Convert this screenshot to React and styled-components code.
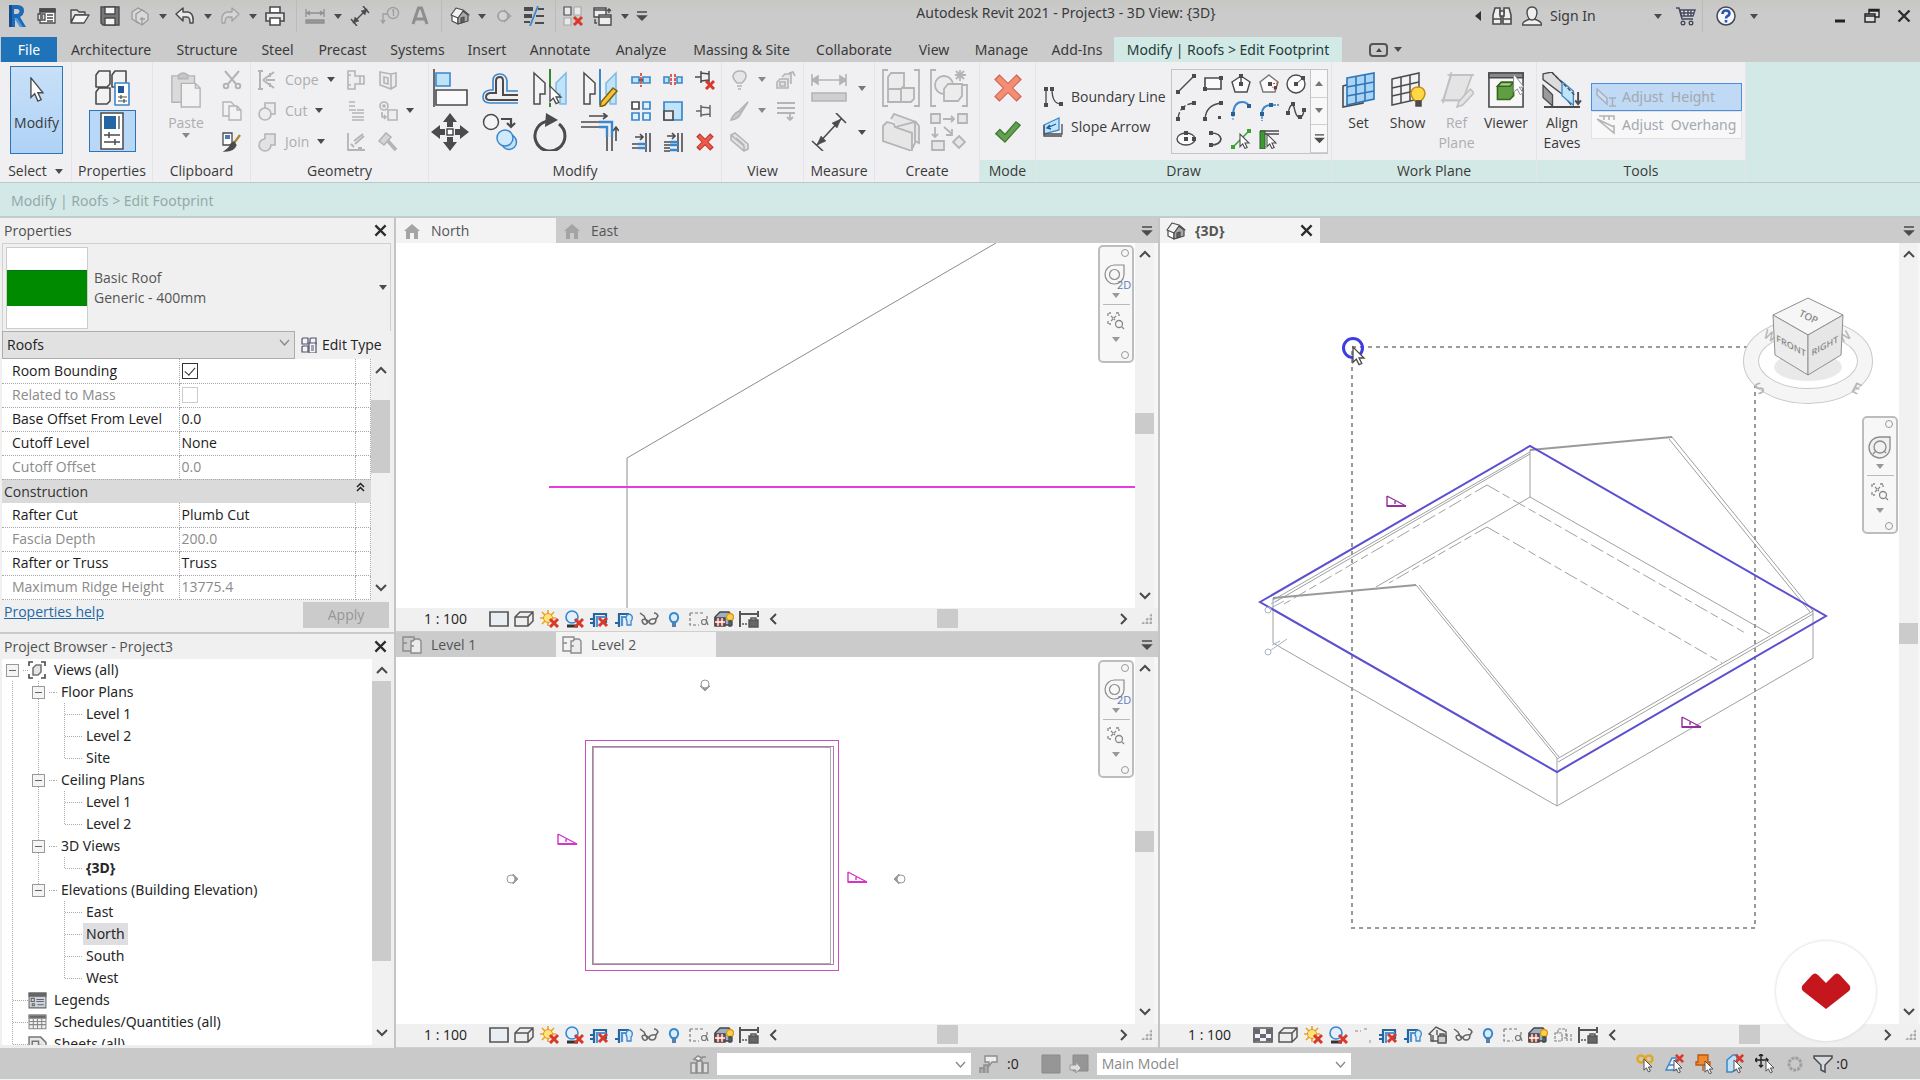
import React from 'react';
import styled, { createGlobalStyle, css } from 'styled-components';

const GlobalStyle = createGlobalStyle`
  * {
    box-sizing: border-box;
  }

  body {
    margin: 0;
    color: #3a3a3a;
    background: #cbcbcb;
    font-family: 'Open Sans', 'Noto Sans', sans-serif;
    font-size: 14px;
    line-height: 20px;
  }

  button, select, input {
    margin: 0;
    font: inherit;
    color: inherit;
  }

  button {
    padding: 0;
    border: 0;
    background: none;
  }
`;

/* ---------- icons ---------- */

const D = '#4b4b4d';
const B = '#3b87cc';
const L = '#bfe3f8';
const G = '#b4b4b6';
const R = '#d8392b';

const Arrow = 'M0 0 L0 14 L3 11 L5.500 16 L8 15 L5.500 10 L10 10 Z';

const RedX = ({ x = 0, y = 0, s = 1 }) => (
  <g transform={`translate(${x} ${y}) scale(${s})`}>
    <path d="M1 1 L9 9 M9 1 L1 9" stroke={R} strokeWidth="3" fill="none" />
  </g>
);

const Pointer = ({ x, y, s = 1 }) => (
  <path d={Arrow} transform={`translate(${x} ${y}) scale(${s})`} fill="#fff" stroke={D} strokeWidth="1.2" />
);

/* every entry is [viewBox width, viewBox height, drawing] */
const icons = {
  revit: [20, 26, (
    <g>
      <path d="M2 2 H11 Q18 3 17 9 Q16.500 12 13 14 L19 24 H13 L8 15 V24 H2 Z M7 6 V11 H10 Q12.500 10.500 12.500 8.500 Q12.500 6 10 6 Z" fill="#1d6bb8" fillRule="evenodd" />
      <path d="M2 2 H5 V24 H2 Z" fill="#134d8c" />
      <path d="M7 15 L10 15 L16 24 H13 Z" fill="#4e9ada" />
    </g>
  )],
  home: [20, 20, (
    <g fill="#fff" stroke={D} strokeWidth="1.3">
      <path d="M3 3 H18 V17 H3 Z" />
      <path d="M3 3 H18 V6 H3 Z" fill={D} />
      <path d="M1 8 H8 V14 H1 Z" fill="#ddd" />
      <path d="M10 9 H16 M10 12 H16 M10 15 H16 M3 10 H6 M3 12 H6" />
    </g>
  )],
  open: [20, 20, (
    <g fill="#e4e4e4" stroke={D} strokeWidth="1.4" strokeLinejoin="round">
      <path d="M1 4 H7 L9 6 H15 V9 H5 L1 16 Z" />
      <path d="M5 9 H19 L14 17 H1 Z" fill="#f5f5f5" />
    </g>
  )],
  save: [20, 20, (
    <g stroke={D} strokeWidth="1.4">
      <path d="M1 1 H19 V19 H3 L1 17 Z" fill="#777" />
      <path d="M5 1 H15 V8 H5 Z M5 12 H15 V19 H5 Z" fill="#f4f4f4" />
    </g>
  )],
  sync: [20, 20, (
    <g fill="#d8d8d8" stroke="#9a9a9a" strokeWidth="1.3">
      <path d="M2 6 L8 2 L14 5 V13 L8 17 L2 13 Z" />
      <path d="M6 8 L12 4 L18 8 V14 L12 19 L6 15 Z" />
      <path d="M12 11 V19 M10 13 H15" />
    </g>
  )],
  undo: [20, 20, <path d="M1 8 L8 2 V6 H13 Q19 7 18 17 H15 Q15 11 12 11 H8 V15 Z" fill="#e8e8e8" stroke={D} strokeWidth="1.5" strokeLinejoin="round" />],
  redo: [20, 20, <path d="M19 8 L12 2 V6 H7 Q1 7 2 17 H5 Q5 11 8 11 H12 V15 Z" fill="#d6d6d6" stroke="#a3a3a3" strokeWidth="1.4" strokeLinejoin="round" />],
  print: [20, 20, (
    <g fill="#fff" stroke={D} strokeWidth="1.6">
      <path d="M5 1 H15 V7 H5 Z" />
      <path d="M1 7 H19 V15 H1 Z" fill="#e6e6e6" />
      <path d="M5 12 H15 V19 H5 Z" />
    </g>
  )],
  measure: [20, 20, (
    <g stroke="#8f8f8f" fill="none" strokeWidth="1.3">
      <path d="M1 3 V11 M19 3 V11 M2 7 H18 M5 5 L2 7 L5 9 M15 5 L18 7 L15 9" />
      <path d="M1 14 H19 V17 H1 Z" fill="#999" />
    </g>
  )],
  dim: [20, 20, (
    <g stroke={D} fill={D} strokeWidth="1.5">
      <path d="M3 17 L17 3" />
      <path d="M3 17 L9 15 L5 11 Z M17 3 L11 5 L15 9 Z" strokeWidth="0.500" />
      <path d="M1 13 L7 20 M13 0 L19 7" />
    </g>
  )],
  tag: [20, 20, (
    <g stroke="#a0a0a0" fill="none" strokeWidth="1.4">
      <circle cx="13" cy="7" r="5.500" />
      <path d="M12 5 L13.500 4 V10 M8 8 H3 V17 M1 14 L3 17 L5 14" />
    </g>
  )],
  letterA: [20, 20, <path d="M3 18 L8.500 2 H11.500 L17 18 M5 13 H15" fill="none" stroke="#8e8e8e" strokeWidth="3" />],
  house: [20, 20, (
    <g stroke={D} strokeWidth="1.2" strokeLinejoin="round">
      <path d="M2 9 L8 11 V18 L2 15 Z" fill="#fff" />
      <path d="M8 11 L13 5 L18 9 V15 L8 18 Z" fill="#a8a8a8" />
      <path d="M1 9 L6 2 L13 4 L19 9 L13 5 L8 12 Z" fill="#f2f2f2" />
      <path d="M11 12 L14 11 V16 L11 17 Z" fill="#666" />
    </g>
  )],
  section: [20, 20, (
    <g fill="none" stroke="#9c9c9c" strokeWidth="1.6">
      <circle cx="9" cy="10" r="5" />
      <path d="M10 3 L18 10 L10 17 Z" fill="#9c9c9c" stroke="none" opacity="0.700" />
      <circle cx="9" cy="10" r="4" fill="#d2d2d2" stroke="none" />
    </g>
  )],
  thin: [20, 20, (
    <g stroke={D}>
      <path d="M0 3 H9 M0 10 H8" strokeWidth="4" />
      <path d="M0 16 H6 M11 17 H20 M12 10 H20 M14 3 H20" strokeWidth="2" />
      <path d="M14 0 L6 20" stroke={B} strokeWidth="1.8" />
    </g>
  )],
  closeHidden: [20, 20, (
    <g fill="#e9e9e9" stroke={D} strokeWidth="1.2">
      <path d="M1 1 H8 V9 H1 Z" />
      <path d="M11 1 H18 V9 H11 Z M1 12 H8 V19 H1 Z" stroke="#aaa" />
      <RedX x={10} y={10} />
    </g>
  )],
  windows: [20, 20, (
    <g fill="#eee" stroke={D} strokeWidth="1.4">
      <path d="M2 2 H14 V11 H2 Z M2 4 H14" />
      <path d="M7 9 H19 V19 H7 Z M7 11 H19" />
      <path d="M17 7 V3 M15 5 L17 3 L19 5 M3 13 V17 H5" fill="none" />
    </g>
  )],
  more: [12, 12, <path d="M1 2 H11 M2 6 H10 L6 10 Z" fill={D} stroke={D} strokeWidth="1.5" />],
  binoculars: [22, 20, (
    <g fill="#efefef" stroke={D} strokeWidth="1.6">
      <path d="M4 2 H9 V7 L10 10 V18 H2 V9 Z M13 2 H18 L20 9 V18 H12 V10 L13 7 Z" />
      <path d="M9 5 H13 V10 H9 Z M2 13 H10 M12 13 H20" />
    </g>
  )],
  person: [20, 20, (
    <g fill="#efefef" stroke={D} strokeWidth="1.4">
      <path d="M0 19 Q1 15 8 13 H12 Q19 15 20 19 Z" />
      <path d="M10 1 Q15 1 15 7 Q14 14 10 14 Q6 14 5 7 Q5 1 10 1 Z" />
    </g>
  )],
  cart: [20, 20, (
    <g fill="#e5e5ee" stroke="#44485c" strokeWidth="1.4">
      <path d="M0 2 H3 L6 13 H17" fill="none" />
      <path d="M4 4 H19 L17 10 H5.500 Z M8 4 V10 M12 4 V10 M15 4 V10 M4 7 H18" />
      <circle cx="7" cy="17" r="1.800" />
      <circle cx="15" cy="17" r="1.800" />
    </g>
  )],
  help: [20, 20, (
    <g>
      <circle cx="10" cy="10" r="9" fill="#f4f6fb" stroke="#44484f" strokeWidth="1.5" />
      <path d="M6.500 8 Q6.500 4.500 10 4.500 Q13.500 4.500 13.500 7.500 Q13.500 9 11.500 10 Q10 11 10 12.500 M10 14 V16.500" fill="none" stroke="#2a56b4" strokeWidth="2.600" />
    </g>
  )],
  searchArrow: [6, 10, <path d="M6 0 V10 L0 5 Z" fill="#333" />],
  min: [14, 16, <path d="M2 13 H12" stroke="#222" strokeWidth="3" />],
  restore: [16, 16, (
    <g fill="#ddd" stroke="#222" strokeWidth="1.4">
      <path d="M5 1.500 H15 V9 H5 Z M5 3 H15" />
      <path d="M1 6 H11 V14 H1 Z M1 8 H11" />
    </g>
  )],
  close: [14, 14, <path d="M1.500 1.500 L12.500 12.500 M12.500 1.500 L1.500 12.500" stroke="#2b2b2b" strokeWidth="2.400" />],

  cursor: [16, 28, <path d="M2 1 V22 L6 18 L9.500 26 L13 24.500 L9.500 17 L15 17 Z" fill="#fff" stroke={D} strokeWidth="1.5" />],
  typeProps: [36, 38, (
    <g fill="#f2f2f2" stroke={D} strokeWidth="1.600" strokeLinejoin="round">
      <path d="M2 6 L5 2 H16 V15 L13 18 H2 Z M18 6 L21 2 H32 V15 L29 18 H18 Z M2 23 L5 19 H16 V32 L13 35 H2 Z" />
      <path d="M21 14 H35 V36 H21 Z" fill="#fff" stroke={B} />
      <path d="M24 17 H30 V24 H24 Z" fill="#1f5a96" stroke="none" />
      <path d="M24 28 H33 M24 32 H33 M27 26 V30 M30 30 V34" strokeWidth="1.2" />
    </g>
  )],
  props: [26, 38, (
    <g fill="none" stroke={D} strokeWidth="1.500">
      <path d="M2 1 H24 V37 H2 Z" fill="#fff" />
      <path d="M5 4 H17 V17 H5 Z" fill="#2564a5" stroke="none" />
      <path d="M20 4 V17" stroke="#888" strokeWidth="2" />
      <path d="M5 23 H21 M5 30 H21 M10 20 V26 M16 27 V33" />
    </g>
  )],
  paste: [34, 38, (
    <g fill="#dadada" stroke={G} strokeWidth="1.500">
      <path d="M2 4 H26 V32 H2 Z" />
      <path d="M9 7 V3 Q14 -1 19 3 V7 Z" fill="#c6c6c6" />
      <path d="M12 12 H27 L32 17 V37 H12 Z M27 12 V17 H32" fill="#f2f2f2" />
    </g>
  )],
  cutClip: [20, 20, (
    <g fill="none" stroke={G} strokeWidth="2">
      <path d="M3 1 L14 14 M17 1 L6 14" />
      <circle cx="4" cy="16" r="2.300" />
      <circle cx="16" cy="16" r="2.300" />
    </g>
  )],
  copyClip: [20, 20, (
    <g fill="#f2f2f2" stroke={G} strokeWidth="1.400">
      <path d="M1 1 H9 L12 4 V15 H1 Z" />
      <path d="M7 5 H15 L19 9 V19 H7 Z M15 5 V9 H19" />
    </g>
  )],
  match: [20, 20, (
    <g stroke={D} strokeWidth="1.300">
      <path d="M1 1 H10 V13 H1 Z" fill="#fff" />
      <path d="M3 3 H8 V7 H3 Z" fill="#4a7ab0" stroke="none" />
      <path d="M18 3 L12 11" stroke="#a98a3e" strokeWidth="2.400" />
      <path d="M12 10 L14 13 Q12 19 3 19 Q8 16 9 12 Z" fill={D} />
    </g>
  )],
  cope: [20, 20, <path d="M1 1 H6 M1 19 H6 M3 1 V19 M6 10 L17 2 M6 10 L17 18 M9 10 H18 M13 3 V7 M13 13 V17" fill="none" stroke={G} strokeWidth="2" />],
  cutG: [20, 20, (
    <g fill="#ececec" stroke={G} strokeWidth="1.600">
      <path d="M8 7 V2 H18 V13 H14" />
      <circle cx="8" cy="13" r="6" />
    </g>
  )],
  joinG: [20, 20, <path d="M8 7 V2 H18 V13 H14 A6 6 0 1 1 8 7" fill="#e2e2e2" stroke={G} strokeWidth="1.600" />],
  beam: [20, 20, <path d="M2 1 H9 V6 H18 V14 H9 V19 H2 Z M2 5 H5 M2 15 H5 M14 6 V14" fill="#eee" stroke={G} strokeWidth="1.600" />],
  wallJoin: [20, 20, (
    <g fill="none" stroke={G} strokeWidth="1.600">
      <path d="M3 1 H9 M3 5 H9 M3 9 H10 M6 12 H18 M6 16 H18 M6 19 H18 M11 9 H18" />
    </g>
  )],
  split: [20, 20, <path d="M2 1 V18 H19 M5 12 L8 15 M8 9 L17 2 M9 12 L18 4 M12 16 H16" fill="none" stroke={G} strokeWidth="1.800" />],
  face: [20, 20, <path d="M2 2 L13 4 L18 3 V16 L13 19 L2 15 Z M13 4 V19 M6 7 L10 8 V14 L6 13 Z" fill="#ececec" stroke={G} strokeWidth="1.600" />],
  paint: [20, 20, (
    <g fill="#eee" stroke={G} strokeWidth="1.600">
      <circle cx="6" cy="5" r="4" />
      <path d="M10 9 H19 V19 H10 Z M4 11 V16 H8 M6 14 L8 16 L6 18" />
      <circle cx="6" cy="5" r="1" />
    </g>
  )],
  demolish: [20, 20, (
    <g stroke={G}>
      <path d="M9 8 L18 18" strokeWidth="3.500" />
      <path d="M1 9 L8 1 L13 5 L6 13 Z" fill="#d5d5d5" strokeWidth="1.600" />
    </g>
  )],

  align: [36, 38, (
    <g stroke={D} strokeWidth="1.600">
      <path d="M2 0 V38" />
      <path d="M4 4 H18 V17 H4 Z" fill={L} stroke={B} />
      <path d="M4 21 H35 V36 H4 Z" fill="#fafafa" />
    </g>
  )],
  offset: [38, 34, (
    <g fill="none">
      <path d="M37 20 H26 V10 Q25 3 19 3 Q12 3 12 10 V19 H9 Q2 20 2 26 Q2 32 9 32 H37" stroke={B} strokeWidth="1.600" />
      <path d="M37 24 H22 V10 Q22 6 19 6 Q15 6 15 10 V22 H9 Q5 23 5 26 Q5 29 9 29 H37" stroke={D} strokeWidth="2" />
    </g>
  )],
  mirrorPick: [36, 38, (
    <g stroke={D} strokeWidth="1.500">
      <path d="M2 4 L13 14 V25 H8 V35 H2 Z" fill="#f4f4f4" />
      <path d="M34 4 L24 14 V25 H28 V35 H34 Z" fill={L} stroke="#7fb9e2" />
      <path d="M18 0 V18" stroke="#2f8a2a" strokeWidth="2" />
      <path d="M18 34 V38" stroke="#2f8a2a" strokeWidth="2" />
      <Pointer x={18} y={17} s={1.1} />
    </g>
  )],
  mirrorDraw: [36, 38, (
    <g stroke={D} strokeWidth="1.500">
      <path d="M2 4 L13 14 V25 H8 V35 H2 Z" fill="#f4f4f4" />
      <path d="M34 4 L24 14 V25 H28 V35 H34 Z" fill={L} stroke="#7fb9e2" />
      <path d="M18 0 V36" stroke={B} strokeWidth="2" />
      <path d="M31 19 L35 22 L23 36 L18 38 L19 33 Z" fill="#f3c33c" stroke="#80600f" />
    </g>
  )],
  move: [38, 38, (
    <g fill={D}>
      <path d="M19 0 L26 9 H22 V14 H16 V9 H12 Z M19 38 L26 29 H22 V24 H16 V29 H12 Z M0 19 L9 12 V16 H14 V22 H9 V26 Z M38 19 L29 12 V16 H24 V22 H29 V26 Z" />
      <path d="M16 16 H22 V22 H16 Z" fill="#fff" stroke={D} strokeWidth="1.500" />
    </g>
  )],
  copyBig: [36, 38, (
    <g fill="#f4f4f4" stroke={D} strokeWidth="1.500">
      <circle cx="9" cy="9" r="7.500" />
      <path d="M19 6 H29 V13 M25 10 L29 14 L33 10" fill="none" strokeWidth="2.200" />
      <circle cx="27" cy="29" r="7.500" fill={L} stroke={B} />
      <circle cx="23" cy="25" r="8" fill="#cfeafa" stroke={B} />
    </g>
  )],
  rotate: [36, 38, (
    <g>
      <path d="M17 6 A15 15 0 1 0 27 9" fill="none" stroke={D} strokeWidth="3" transform="translate(0 2)" />
      <path d="M14 0 L26 7 L13 14 Z" fill={D} />
    </g>
  )],
  trim: [38, 38, (
    <g fill="none" stroke={D} strokeWidth="1.600">
      <path d="M8 3 H26 M22 0 L26 3 L22 6 M35 28 V14 M32 18 L35 14 L38 18 M0 9 H18 M0 14 H18 M26 24 V38 M31 24 V38" />
      <path d="M18 9 H31 V24 M18 14 H26 V24" stroke={B} strokeWidth="2.400" />
    </g>
  )],
  splitEl: [20, 14, (
    <g fill={L} stroke={B} strokeWidth="1.600">
      <path d="M1 4 H8 V10 H1 Z M12 4 H19 V10 H12 Z" />
      <path d="M8 7 H12" stroke={D} />
      <path d="M10 0 V14" stroke={R} strokeDasharray="3 1" />
    </g>
  )],
  splitGap: [20, 14, (
    <g fill={L} stroke={B} strokeWidth="1.600">
      <path d="M1 4 H6 V10 H1 Z M14 4 H19 V10 H14 Z" />
      <path d="M8 1 V13 M12 1 V13" stroke={R} strokeDasharray="3 1" />
    </g>
  )],
  unpin: [20, 20, (
    <g fill="#eee" stroke={D} strokeWidth="1.500">
      <path d="M0 7 H6 M6 1 V13 M6 3 L14 4 M6 11 L14 10 M14 1 V13" />
      <RedX x={10} y={10} s={1} />
    </g>
  )],
  array: [20, 20, (
    <g fill="#dff1fc" stroke={B} strokeWidth="1.700">
      <path d="M1 1 H8 V8 H1 Z" fill="#fff" stroke={D} />
      <path d="M12 1 H19 V8 H12 Z M1 12 H8 V19 H1 Z M12 12 H19 V19 H12 Z" />
    </g>
  )],
  scale: [20, 20, (
    <g fill={L} stroke={B} strokeWidth="1.700">
      <path d="M1 1 H19 V19 H1 Z" />
      <path d="M1 10 H10 V19 H1 Z" fill="#eee" stroke={D} />
    </g>
  )],
  pin: [20, 20, <path d="M1 10 H6 M6 4 V16 M6 6 L15 7 M6 14 L15 13 M15 4 V16" fill="none" stroke="#666" strokeWidth="1.500" />],
  trimOne: [20, 20, (
    <g fill="none" stroke={D} strokeWidth="1.600">
      <path d="M4 5 H12 M9 2 L12 5 L9 8 M1 12 H7 M1 16 H7 M15 1 V20 M19 1 V20" />
      <path d="M7 12 H15 M7 16 H15" stroke={B} strokeWidth="2.400" />
    </g>
  )],
  trimMany: [20, 20, (
    <g fill="none" stroke={D} strokeWidth="1.600">
      <path d="M4 4 H12 M9 1 L12 4 L9 7 M1 10 H7 M1 13 H7 M1 16 H7 M1 19 H7 M15 1 V20 M19 1 V20" />
      <path d="M7 10 H15 M7 13 H15 M7 18 H15" stroke={B} strokeWidth="2.400" />
    </g>
  )],
  del: [20, 20, (
    <g>
      <path d="M3 3 L17 17 M17 3 L3 17" stroke="#c0392b" strokeWidth="5" />
      <path d="M4 4 L16 16 M16 4 L4 16" stroke="#f05a4a" strokeWidth="3" />
    </g>
  )],

  bulb: [20, 20, <path d="M7 13 Q3 9 3 6 Q4 1 10 1 Q16 1 16 6 Q16 9 12 13 Z M7 16 H12 M8 19 H11" fill="#e6e6e6" stroke={G} strokeWidth="1.600" />],
  hideBox: [20, 20, <path d="M1 12 L4 9 H12 V18 H1 Z M6 7 L9 4 H15 V14 M13 3 L17 2 L19 6 M4 12 H9 V16 H4 Z" fill="#e6e6e6" stroke={G} strokeWidth="1.600" />],
  brush: [20, 20, <path d="M18 1 L9 10 L11 12 Z M9 10 Q3 13 1 19 Q9 18 11 12 Z" fill="#c9c9c9" stroke={G} strokeWidth="1.600" />],
  lineW: [20, 20, <path d="M1 2 H19 M1 7 H19 M1 12 H19 M14 12 V19 M11 16 L14 19 L17 16" fill="none" stroke={G} strokeWidth="1.800" />],
  displace: [20, 20, <path d="M1 3 L5 1 L18 12 V17 L14 19 L1 8 Z M6 6 L14 13 M1 3 L14 14 V19" fill="#e2e2e2" stroke={G} strokeWidth="1.600" />],
  rulerBig: [36, 34, (
    <g stroke={G} fill={G} strokeWidth="1.600">
      <path d="M1 9 H35 M1 9 L7 5 V13 Z M35 9 L29 5 V13 Z M1 3 V15 M35 3 V15" />
      <path d="M1 22 H35 V30 H1 Z" fill="#cfcfcf" />
    </g>
  )],
  dimBig: [36, 38, (
    <g stroke={D} fill={D} strokeWidth="1.600">
      <path d="M6 32 L30 6 M1 28 L12 38 M25 0 L35 10" />
      <path d="M6 32 L15 28 L10 23 Z M30 6 L21 10 L26 15 Z" strokeWidth="0.500" />
    </g>
  )],
  group1: [38, 38, (
    <g fill="#ececec" stroke={G} strokeWidth="1.800">
      <path d="M6 1 H1 V37 H6 M32 1 H37 V37 H32" fill="none" />
      <path d="M6 8 L9 4 H22 V19 H32 V30 L29 33 H6 Z M6 20 H19 V33 M19 20 L22 17" />
    </g>
  )],
  group2: [38, 38, (
    <g fill="#ececec" stroke={G} strokeWidth="1.800">
      <path d="M6 1 H1 V37 H6 M32 16 H37 V37 H32" fill="none" />
      <circle cx="14" cy="16" r="9" />
      <path d="M14 20 L18 15 H32 V27 L28 32 H14 Z" />
      <path d="M30 1 V12 M25 6 H36 M26 2 L34 10 M34 2 L26 10" />
    </g>
  )],
  assembly: [38, 38, (
    <g fill="#e6e6e6" stroke={G} strokeWidth="1.800">
      <path d="M9 6 L12 1 L34 9 L37 13 V30 L33 28" />
      <path d="M1 13 L5 9 L12 11 L13 14 L30 20 V38 L1 28 Z" />
      <path d="M13 14 L33 9 V30 L30 36" fill="none" />
    </g>
  )],
  similar: [38, 38, (
    <g fill="#e6e6e6" stroke={G} strokeWidth="1.800">
      <path d="M1 1 H10 V10 H1 Z M28 1 H37 V10 H28 Z M2 28 H14 V37 H2 Z M29 23 L35 29 L29 35 L23 29 Z" />
      <path d="M13 6 H24 M21 3 L24 6 L21 9 M5 14 V24 M2 21 L5 24 L8 21 M14 14 L22 21 M22 16 V22 H16" fill="none" />
    </g>
  )],
  cancel: [30, 30, (
    <g>
      <path d="M3 3 L27 27 M27 3 L3 27" stroke="#c9604c" strokeWidth="8" />
      <path d="M4 4 L26 26 M26 4 L4 26" stroke="#f58c74" strokeWidth="6" />
    </g>
  )],
  accept: [32, 28, <path d="M2 16 L7 11 L13 17 L26 2 L31 6 L13 26 Z" fill="#63a04f" stroke="#3f7a35" strokeWidth="1.500" />],

  boundary: [20, 20, (
    <g fill="none" stroke={D} strokeWidth="1.300">
      <path d="M3 2 V18 M9 2 Q9 17 18 17" />
      <path d="M1 0 H5 V4 H1 Z M1 16 H5 V20 H1 Z M7 0 H11 V4 H7 Z M16 15 H20 V19 H16 Z" fill={D} stroke="none" />
    </g>
  )],
  slope: [20, 20, (
    <g fill={L} stroke={B} strokeWidth="1.300">
      <path d="M1 8 L16 1 V13 L1 17 Z" />
      <path d="M1 17 H19 V7 M1 8 V19 H19" fill="none" stroke={D} />
      <path d="M13 7 L4 11 M7 8 L4 11 L8 12" stroke="#1f5a96" fill="none" />
    </g>
  )],
  dLine: [20, 20, <g><path d="M2 18 L18 2" stroke={D} strokeWidth="1.400" /><path d="M0 16 H4 V20 H0 Z M16 0 H20 V4 H16 Z" fill={D} /></g>],
  dRect: [20, 20, <g><path d="M2 4 H18 V15 H2 Z" fill="#fafafa" stroke={D} strokeWidth="1.600" /><path d="M0 13 H4 V17 H0 Z M16 2 H20 V6 H16 Z" fill={D} /></g>],
  dPoly: [20, 20, <g><path d="M10 2 L19 8 L16 18 H4 L1 8 Z" fill="#fafafa" stroke={D} strokeWidth="1.400" /><path d="M10 10 V2" stroke={D} strokeWidth="1.400" /><path d="M8 0 H12 V4 H8 Z M8 8 H12 V12 H8 Z" fill={D} /></g>],
  dPolyC: [20, 20, <g><path d="M10 1 L19 8 L16 18 H4 L1 8 Z" fill="#fafafa" stroke="#777" strokeWidth="1.400" /><path d="M11 10 L19 9 L16 16 Z" fill="none" stroke={R} strokeDasharray="2 1" /><path d="M9 8 H13 V12 H9 Z M15 12 H18 V15 H15 Z" fill={D} /></g>],
  dCircle: [20, 20, <g><circle cx="10" cy="10" r="9" fill="#fafafa" stroke={D} strokeWidth="1.400" /><path d="M10 10 L17 4" stroke={D} /><path d="M8 8 H12 V12 H8 Z M15 2 H19 V6 H15 Z" fill={D} /></g>],
  dArc3: [20, 20, <g><path d="M2 18 Q3 4 18 2" fill="none" stroke={D} strokeWidth="1.400" strokeDasharray="7 2" /><path d="M0 16 H4 V20 H0 Z M5 5 H9 V9 H5 Z M16 0 H20 V4 H16 Z" fill={D} /></g>],
  dArcC: [20, 20, <g><path d="M2 18 Q3 4 18 2" fill="none" stroke={D} strokeWidth="1.400" /><path d="M0 16 H4 V20 H0 Z M16 0 H20 V4 H16 Z M15 15 H18 V18 H15 Z" fill={D} /></g>],
  dArcT: [20, 20, <g><path d="M2 13 Q3 1 11 1 Q16 1 18 5" fill="none" stroke={B} strokeWidth="2" /><path d="M2 14 V20" stroke={B} strokeDasharray="2 1" /><path d="M0 11 H4 V15 H0 Z M16 3 H20 V7 H16 Z" fill="#2d5f8f" /></g>],
  dFillet: [20, 20, <g><path d="M3 13 Q3 4 12 4" fill="none" stroke={B} strokeWidth="2" /><path d="M3 15 V20 M14 4 H20" stroke={B} strokeWidth="1.400" strokeDasharray="3 1" /><path d="M1 11 H5 V15 H1 Z M10 2 H14 V6 H10 Z" fill="#2d5f8f" /></g>],
  dSpline: [20, 20, <g><path d="M2 12 Q5 0 8 6 Q10 16 13 16 Q17 17 18 9" fill="none" stroke={D} strokeWidth="1.400" /><path d="M0 10 H4 V14 H0 Z M5 1 H9 V5 H5 Z M12 14 H16 V18 H12 Z M16 7 H20 V11 H16 Z" fill={D} /></g>],
  dEllipse: [20, 20, <g><ellipse cx="10" cy="10" rx="9" ry="6" fill="#fafafa" stroke={D} strokeWidth="1.400" /><path d="M8 8 H12 V12 H8 Z M8 2 H12 V6 H8 Z M16 8 H20 V12 H16 Z" fill={D} /></g>],
  dPartEl: [20, 20, <g><path d="M8 4 Q17 4 18 10 Q17 16 8 16" fill="none" stroke={D} strokeWidth="1.600" /><path d="M6 2 H10 V6 H6 Z M6 14 H10 V18 H6 Z" fill={D} /></g>],
  dPick: [20, 20, <g><path d="M2 18 L18 2" stroke="#3aa335" strokeWidth="1.600" /><path d="M0 16 H4 V20 H0 Z M16 0 H20 V4 H16 Z" fill="#3aa335" /><Pointer x={9} y={5} s={0.9} /></g>],
  dWalls: [20, 20, <g><path d="M1 2 H20 M6 5 H20" stroke={D} strokeWidth="1.600" /><path d="M1 2 H6 V20 H1 Z" fill="#3c9a35" stroke="#2c5c28" /><Pointer x={8} y={5} s={0.9} /></g>],

  wpSet: [36, 36, (
    <g fill="#a9d4f5" stroke="#2c75b8" strokeWidth="1.600">
      <path d="M2 14 L22 8 V31 L2 35 Z" fill="#dcecf8" stroke={D} />
      <path d="M6 6 L33 1 V27 L6 33 Z" />
      <path d="M15 4 V31 M24 3 V29 M6 15 L33 10 M6 24 L33 19" fill="none" />
    </g>
  )],
  wpShow: [36, 36, (
    <g fill="#f2f2f4" stroke={D} strokeWidth="1.500">
      <path d="M2 7 L29 1 V27 L2 33 Z" />
      <path d="M11 5 V31 M20 3 V29 M2 16 L29 10 M2 24 L29 18" fill="none" />
      <path d="M25 29 Q21 25 21 21 Q22 15 28 15 Q34 15 35 21 Q35 25 31 29 Z" fill="#ffd84a" stroke="#c58c12" />
      <path d="M26 29 H31 V34 H26 Z" fill={D} />
    </g>
  )],
  refPlane: [36, 38, (
    <g fill="#e4e4e4" stroke="#c0c0c2" strokeWidth="1.700">
      <path d="M12 3 H34 L24 30 H3 Z" />
      <path d="M8 3 H36 M12 0 L3 33 M1 30 H26" fill="none" />
      <path d="M32 18 L36 22 L24 35 L18 37 L20 31 Z" />
    </g>
  )],
  viewer: [38, 38, (
    <g stroke={D} strokeWidth="1.700">
      <path d="M1 1 H37 V37 H1 Z" fill="#f7f7f7" />
      <path d="M1 1 H37 V6 H1 Z" fill="#888" />
      <path d="M10 15 L14 11 H27 V25 L23 29 H10 Z" fill="#5f9f42" stroke="#38661f" />
      <path d="M10 15 L14 11 H27 L23 15 Z" fill="#a4d388" stroke="#38661f" />
      <path d="M27 2 V21 L31 18 L34 24 L37 22 L33 16 H38 Z" fill="#fff" stroke="#888" strokeWidth="1" />
    </g>
  )],
  eaves: [42, 38, (
    <g stroke={D} strokeWidth="1.400">
      <path d="M1 2 L10 0 L30 20 V34 L22 24 L1 8 Z" fill="#dcdcdc" />
      <path d="M1 14 L11 24 V36 L1 27 Z" fill="#9a9a9a" />
      <path d="M21 10 L33 20 V35 L21 25 Z" fill={L} stroke={B} />
      <path d="M10 0 L34 24" strokeDasharray="4 2" fill="none" />
      <path d="M38 21 V34 M35 30 L38 34 L41 30 M2 37 H40" strokeWidth="2" fill="none" />
    </g>
  )],
  adjH: [20, 20, <path d="M1 2 L11 11 V17 L1 8 Z M13 11 H20 M13 19 H20 M16.500 11 V19" fill="#d5deea" stroke="#a3b1c4" strokeWidth="1.500" />],
  adjO: [20, 20, <path d="M1 4 L18 18 V10 M3 1 H18 V5 M8 1 V5 M13 1 V5 M1 4 L18 12" fill="none" stroke={G} strokeWidth="1.600" />],

  typeSmall: [16, 16, (
    <g fill="#f4f4f8" stroke="#50506a" strokeWidth="1.200">
      <path d="M1 2 L2 1 H7 V7 H1 Z M9 2 L10 1 H15 V7 H9 Z M1 10 L2 9 H7 V15 H1 Z" />
      <path d="M8 6 H15 V16 H8 Z M10 9 H13 M10 13 H13 M10 11 H13" />
    </g>
  )],
  views: [18, 18, (
    <g fill="none" stroke={D} strokeWidth="1.600">
      <path d="M1 5 V1 H5 M13 1 H17 V5 M17 13 V17 H13 M5 17 H1 V13" />
      <path d="M5 7 L8 4 H13 V11 L10 14 H5 Z" fill="#e6e6e6" stroke="#777" />
    </g>
  )],
  legend: [18, 16, (
    <g stroke="#666" fill="#cdd3dc">
      <path d="M1 1 H17 V15 H1 Z" />
      <path d="M1 1 H17 V4 H1 Z" fill="#666" />
      <path d="M3 6 H6 V9 H3 Z M4 11 H6 V13 H4 Z M8 7 H15 M8 9 H15 M9 12 H15" />
    </g>
  )],
  sched: [18, 16, (
    <g stroke="#888" fill="#f0f0f0">
      <path d="M1 1 H17 V14 H1 Z M1 7 H17 M1 10 H17 M5 4 V14 M9 4 V14 M13 4 V14" />
      <path d="M1 1 H17 V4 H1 Z" fill="#666" />
    </g>
  )],
  sheet: [18, 16, (
    <g stroke="#777" fill="#e8e8e8" strokeWidth="1.400">
      <path d="M1 1 H12 L17 6 V16 H1 Z M4 5 H10 V13 H4 Z M10 9 H13 V16" />
    </g>
  )],
  elev: [20, 20, <path d="M2 10 L10 3 L18 10 H16 V18 H12 V12 H8 V18 H4 V10 Z" fill="#a4a4a4" />],
  plan: [20, 20, (
    <g fill="#ececec" stroke="#8c8c8c" strokeWidth="1.400">
      <path d="M1 2 H12 V16 H1 Z" fill="none" />
      <path d="M9 6 H11 L13 4 H17 L19 6 V18 H9 Z" />
      <path d="M1 8 H5 M9 11 H12" />
    </g>
  )],

  vDetail: [20, 18, <path d="M1 2 H19 V16 H1 Z" fill="#e9eef4" stroke="#555" strokeWidth="1.700" />],
  vGrid: [20, 18, <g><path d="M1 2 H19 V16 H1 Z" fill="#f3f3f3" stroke="#555" strokeWidth="1.700" /><path d="M2 3 H7 V8 H2 Z M13 3 H18 V8 H13 Z M7 8 H13 V12 H7 Z M2 12 H7 V15 H2 Z M13 12 H18 V15 H13 Z" fill="#667" /></g>],
  vStyle: [20, 18, <path d="M1 7 L6 2 H19 V11 L14 16 H1 Z M1 7 H14 V16 M14 7 L19 2" fill="#eee" stroke="#555" strokeWidth="1.500" />],
  vSun: [20, 18, (
    <g>
      <path d="M9 0 V16 M1 8 H17 M3 2 L15 14 M15 2 L3 14" stroke="#eea320" strokeWidth="1.600" />
      <circle cx="9" cy="8" r="4.500" fill="#ffe27a" stroke="#e09a1c" />
      <RedX x={10} y={8} s={1} />
    </g>
  )],
  vShadow: [20, 18, (
    <g>
      <path d="M3 16 H14" stroke="#333" strokeWidth="3" />
      <circle cx="8" cy="7" r="6" fill="#e3f0fb" stroke={B} strokeWidth="1.600" />
      <RedX x={10} y={8} s={1} />
    </g>
  )],
  vCrop: [20, 18, (
    <g fill="none" stroke="#2565a0" strokeWidth="2.200">
      <path d="M1 13 H5 M5 17 V4 H17 V13 M1 9 H4" />
      <path d="M8 17 V7 H17" stroke="#4f95d6" />
      <RedX x={9} y={7} s={1} />
    </g>
  )],
  vCropShow: [20, 18, (
    <g fill="none" stroke="#2565a0" strokeWidth="2.200">
      <path d="M1 13 H5 M5 17 V4 H15" />
      <path d="M8 16 V7 H12" stroke="#4f95d6" />
      <path d="M13 15 V11 Q11 8 13 5 Q16 3 18 6 Q19 9 17 11 V15 Z" fill="#d9ecfb" stroke={B} strokeWidth="1.300" />
    </g>
  )],
  vGlasses: [20, 18, <path d="M1 3 L5 6 L8 12 M3 10 Q6 8 9 11 Q8 15 5 14 Q3 13 3 10 M10 11 Q12 8 17 9 Q17 14 13 14 Q10 14 10 11 M17 9 L19 6 Q18 3 15 3" fill="none" stroke="#666" strokeWidth="1.500" />],
  vBulb: [20, 18, <g><path d="M8 12 Q5 9 6 6 Q7 3 10 3 Q13 3 14 6 Q15 9 12 12 Z" fill="#d9edfd" stroke={B} strokeWidth="1.800" /><path d="M8 13 H12 V17 H8 Z" fill="#5d7ea4" /></g>],
  vDash: [20, 18, (
    <g fill="none" stroke="#777" strokeWidth="1.200">
      <path d="M1 3 H16 M1 3 V15 H10 M18 6 V9" strokeDasharray="3 2" />
      <circle cx="15" cy="12" r="2.500" />
      <path d="M17 9 L19 15" />
    </g>
  )],
  vModel: [20, 18, (
    <g stroke="#444" strokeWidth="1.300">
      <path d="M1 7 L6 2 H15 L18 6 V15 H1 Z" fill="#9bb0c8" />
      <path d="M1 8 H11 V16 H1 Z" fill="#b54536" />
      <path d="M1 12 H11 M4 8 V16 M8 8 V16" stroke="#fff" />
      <circle cx="16" cy="7" r="3.500" fill="#ffd04a" stroke="#d8961a" />
      <path d="M15 11 H17 V16 H15 Z" fill="#59a" />
    </g>
  )],
  vConstr: [20, 18, (
    <g fill="none" stroke="#555" strokeWidth="1.400">
      <path d="M1 1 V17 M19 1 V7 M1 4 H19" strokeWidth="2" />
      <path d="M3 14 H9" strokeDasharray="2 1" />
      <path d="M10 10 H19 V17 H10 Z" fill="#666" />
      <path d="M12 10 V8 H17 V10" />
    </g>
  )],
  vFaint: [20, 18, <path d="M2 5 H8 M11 3 H16 M17 14 V17" stroke="#aaa" strokeWidth="1.300" strokeDasharray="3 2" />],
  vLock: [20, 18, (
    <g fill="#eee" stroke="#555" strokeWidth="1.400">
      <path d="M1 8 L8 1 L18 6 V15 H3 V9 Z" />
      <path d="M5 9 V16 M9 4 V9" />
      <path d="M10 10 H18 V17 H10 Z M12 10 V8 H16 V10" fill="#c8d0cf" />
    </g>
  )],
  vBoxes: [20, 18, <path d="M2 7 H9 V15 H2 Z M5 7 V3 H13 V12 H9 M14 8 V15 M18 8 V15" fill="none" stroke="#888" strokeWidth="1.200" strokeDasharray="3 1" />],

  buildings: [20, 20, <g fill="#ddd" stroke="#8d8d8d" strokeWidth="1.500"><path d="M2 9 H7 V19 H2 Z M8 7 H13 V19 H8 Z M14 9 H19 V19 H14 Z" /><path d="M5 5 L9 2 L13 4 L10 7 Z M13 3 H17" fill="#f2f2f2" /></g>],
  workset: [20, 20, (
    <g fill="#eee" stroke="#8d8d8d" strokeWidth="1.400">
      <path d="M1 19 V14 H5 V19 M5 19 V11 H9 V19" fill="#aaa" />
      <path d="M6 2 H18 V8 H13 L10 12 V8 H6 Z" />
    </g>
  )],
  block: [20, 20, <path d="M1 1 H19 V19 H1 Z" fill="#969696" stroke="#8a8a8a" />],
  optionSet: [20, 20, <g><path d="M4 1 H19 V17 H4 Z" fill="#969696" stroke="#8a8a8a" /><path d="M1 11 H7 V8 L12 14 L7 19 V16 H1 Z" fill="#ddd" stroke="#999" /></g>],
  selLink: [20, 20, (
    <g>
      <g fill="none" stroke="#e0a92a" strokeWidth="2.600">
        <circle cx="6" cy="5" r="3.500" />
        <circle cx="14" cy="5" r="3.500" />
      </g>
      <Pointer x={9} y={5} s={0.8} />
    </g>
  )],
  selUnder: [20, 20, <g><path d="M1 16 L7 4 H11 L11 16 Z M4 11 H11" fill="#e4f2fb" stroke={B} strokeWidth="1.500" /><RedX x={10} y={0} s={0.9} /><Pointer x={9} y={6} s={0.8} /></g>],
  selPin: [20, 20, <g><path d="M3 1 H13 V8 H15 V11 H1 V8 H3 Z M8 11 V17" fill="#f08a2c" stroke="#b85812" strokeWidth="1.300" /><Pointer x={10} y={7} s={0.8} /></g>],
  selFace: [20, 20, <g><path d="M2 6 L8 1 H12 V15 L7 18 H2 Z" fill="#bfe0f5" stroke={B} strokeWidth="1.500" /><RedX x={10} y={0} s={0.9} /><Pointer x={9} y={6} s={0.8} /></g>],
  drag: [20, 20, <g><path d="M6 0 V13 M0 6 H13 M4 2 L6 0 L8 2 M4 11 L6 13 L8 11 M2 4 L0 6 L2 8 M11 4 L13 6 L11 8" fill="none" stroke="#222" strokeWidth="1.400" /><Pointer x={11} y={6} s={0.8} /></g>],
  ring: [20, 20, <circle cx="10" cy="10" r="6" fill="none" stroke="#a0a0a0" strokeWidth="3" strokeDasharray="3 1" />],
  filter: [20, 20, <path d="M1 2 H19 V4 L12 11 V18 L8 16 V11 L1 4 Z" fill="#d7dade" stroke="#4b4b4d" strokeWidth="1.500" />],
  wheel2d: [24, 24, <g fill="none" stroke="#8c8c8c" strokeWidth="1.200"><path d="M11 1 H20 V11 A9.500 9.500 0 1 1 11 1 Z" /><circle cx="10.500" cy="10.500" r="5" /></g>],
  wheel: [24, 24, <g fill="#f0f0f0" stroke="#8c8c8c" strokeWidth="1.300"><path d="M12 2 H22 V13 A10.500 10.500 0 1 1 12 2 Z" /><circle cx="12" cy="12" r="6" /><path d="M5 19 L8 16 M18 18 L16 16" /></g>],
  zoomNav: [18, 18, <g fill="none" stroke="#888" strokeWidth="1.300"><path d="M1 4 V1 H4 M9 1 H12 V4 M1 9 V12 H4 M4 4 L8 8 M9 4 L4 9" strokeDasharray="3 1" /><circle cx="12" cy="12" r="3.500" /><path d="M15 15 L17 17" /></g>],
};

const Svg = styled.svg`
  display: block;
  flex: none;
`;

const Icon = ({ name, size = 20 }) => {
  const [w, h, art] = icons[name];
  return (
    <Svg viewBox={`0 0 ${w} ${h}`} height={size} width={Math.round((size * w) / h)} aria-hidden="true">
      {art}
    </Svg>
  );
};

const Caret = styled.span`
  flex: none;
  border: 4px solid transparent;
  border-top: 5px solid ${({ $color }) => $color || '#4b4b4d'};
  border-bottom: 0;
`;

const CHEVRONS = {
  up: 'M1 8 L6 3 L11 8',
  down: 'M1 3 L6 8 L11 3',
  left: 'M8 1 L3 6 L8 11',
  right: 'M4 1 L9 6 L4 11',
};

const Chevron = ({ dir }) => (
  <Svg width="12" height="12" viewBox="0 0 12 12" aria-hidden="true">
    <path d={CHEVRONS[dir]} fill="none" stroke="#4a4a4a" strokeWidth="2" />
  </Svg>
);

/* ---------- frame ---------- */

const Page = styled.div`
  display: flex;
  flex-direction: column;
  height: 100vh;
  overflow: hidden;
`;

const TitleBar = styled.header`
  display: flex;
  height: 37px;
  padding-bottom: 5px;
  background: linear-gradient(#c6c6c3, #cbcbcc 12px);
`;

const QuickGroup = styled.div`
  display: flex;
  align-items: center;
  padding: 0 6px 0 3px;
  border-left: 1px solid ${({ $plain }) => ($plain ? 'transparent' : '#bbb')};
`;

const BarButton = styled.button`
  display: flex;
  align-items: center;
  justify-content: center;
  width: ${({ $w }) => $w || 30}px;
  height: 32px;
`;

const AppTitle = styled.div`
  flex: 1;
  font-family: 'Noto Sans', 'Open Sans', sans-serif;
  line-height: 26px;
  text-align: center;
`;

const SignIn = styled.button`
  display: flex;
  align-items: center;
  gap: 8px;
  width: 124px;
  height: 32px;
  font-family: 'Noto Sans', 'Open Sans', sans-serif;
`;

const WindowButtons = styled.div`
  display: flex;
  padding-left: 57px;
`;

const TabRow = styled.nav`
  display: flex;
  height: 25px;
  padding-left: 1px;
  font-family: 'Noto Sans', 'Open Sans', sans-serif;
  background: #cbcbcc;
`;

const Tab = styled.button`
  flex: none;
  width: ${({ $w }) => $w}px;
  line-height: 25px;
  white-space: nowrap;
  ${({ $file }) => $file && css`
    color: #fff;
    background: #1f73b9;
  `}
  ${({ $context }) => $context && css`
    color: #203c3a;
    background: #d3e9e6;
  `}
`;

const MinimizeTab = styled.button`
  display: flex;
  align-items: center;
  gap: 6px;
  margin-left: 27px;
`;

const Pill = styled.span`
  display: flex;
  justify-content: center;
  width: 19px;
  padding: 3px 0;
  border: 2px solid #555;
  border-radius: 4px;

  &::after {
    border: 3px solid transparent;
    border-top: 0;
    border-bottom: 4px solid #444;
    content: '';
  }
`;

/* ---------- ribbon ---------- */

const Ribbon = styled.div`
  display: flex;
  height: 121px;
  border-bottom: 1px solid #b9c9c8;
  background: #d3e9e8;
`;

const PanelBox = styled.section`
  display: flex;
  flex: none;
  flex-direction: column;
  width: ${({ $w }) => $w}px;
  border-right: 1px solid #e4e5e8;
  background: #f0f0f2;
`;

const PanelBody = styled.div`
  display: flex;
  gap: ${({ $gap }) => $gap || 0}px;
  justify-content: ${({ $center }) => ($center ? 'center' : 'flex-start')};
  height: 98px;
  padding: 2px 0 0 ${({ $pad }) => $pad || 0}px;
`;

const PanelName = styled.div`
  display: flex;
  flex: 1;
  align-items: center;
  justify-content: center;
  gap: 8px;
  background: ${({ $context }) => ($context ? '#d3e9e6' : 'transparent')};
`;

const Panel = ({ name, w, pad, gap, center, context, caret, children }) => (
  <PanelBox $w={w}>
    <PanelBody $pad={pad} $gap={gap} $center={center}>{children}</PanelBody>
    <PanelName $context={context}>
      {name}
      {caret && <Caret />}
    </PanelName>
  </PanelBox>
);

const Small = styled.div`
  display: grid;
  grid-template-rows: repeat(3, 31px);
  grid-template-columns: repeat(${({ $cols }) => $cols || 1}, ${({ $w }) => $w}px);
  column-gap: 8px;
`;

const Large = styled.div`
  display: grid;
  grid-template-rows: repeat(2, 44px);
  grid-template-columns: repeat(${({ $cols }) => $cols || 1}, ${({ $w }) => $w}px);
  column-gap: 8px;
  padding-top: 2px;
`;

const Tool = styled.button`
  display: flex;
  gap: 8px;
  align-items: center;
  justify-content: ${({ $align }) => $align || 'center'};
  white-space: nowrap;
  color: ${({ $off }) => ($off ? '#adadb0' : 'inherit')};
`;

const Pressed = styled.button`
  display: flex;
  align-items: center;
  justify-content: center;
  height: 42px;
  border: 1px solid #2f74b5;
  background: #b9d8f7;
`;

const TallTool = styled.button`
  display: flex;
  flex-direction: column;
  align-items: center;
  width: ${({ $w }) => $w}px;
  height: 88px;
  margin-top: 2px;
  border: 1px solid ${({ $on }) => ($on ? '#2f74b5' : 'transparent')};
  color: ${({ $off }) => ($off ? '#adadb0' : 'inherit')};
  background: ${({ $on }) => ($on ? 'linear-gradient(#c8e0f8, #aed2f6)' : 'none')};
`;

const TallArt = styled.span`
  display: flex;
  flex: none;
  align-items: center;
  height: 46px;
`;

const Tall = ({ icon, size = 36, w, label, on, off, caret }) => (
  <TallTool $w={w} $on={on} $off={off}>
    <TallArt><Icon name={icon} size={size} /></TallArt>
    {label}
    {caret && <Caret $color={off && '#888'} />}
  </TallTool>
);

const DrawModes = styled.div`
  display: grid;
  grid-template-rows: 30px 30px;
  width: 128px;
  padding-top: 18px;
`;

const Gallery = styled.div`
  display: flex;
  width: 157px;
  height: 85px;
  margin-top: 5px;
  border: 1px solid #c4c4c8;
`;

const GalleryGrid = styled.div`
  display: grid;
  flex: 1;
  grid-template-columns: repeat(5, 1fr);
  grid-template-rows: repeat(3, 1fr);
`;

const GallerySteps = styled.div`
  display: grid;
  grid-template-rows: repeat(3, 1fr);
  width: 17px;
  border-left: 1px solid #c4c4c8;

  button {
    display: flex;
    align-items: center;
    justify-content: center;
    border-bottom: 1px solid #d0d0d4;
    background: #f8f8f8;
  }
`;

const UpCaret = styled.span`
  border: 4px solid transparent;
  border-top: 0;
  border-bottom: 5px solid #777;
`;

const AdjustList = styled.div`
  display: grid;
  grid-template-rows: 28px 28px;
  width: 151px;
  height: 56px;
  margin-top: 19px;
  font-family: 'Noto Sans', 'Open Sans', sans-serif;
`;

const Adjust = styled.button`
  display: flex;
  align-items: center;
  gap: 6px;
  padding-left: 4px;
  border: 1px solid ${({ $on }) => ($on ? '#4b8fe0' : '#e2e2e4')};
  color: #a3a8b0;
  background: ${({ $on }) => ($on ? '#c0d9f4' : '#f8f8f9')};
  white-space: nowrap;
`;

const OptionsBar = styled.div`
  height: 35px;
  padding-left: 11px;
  font-family: 'Noto Sans', 'Open Sans', sans-serif;
  line-height: 35px;
  color: #93a9a7;
  border-bottom: 2px solid #c3cccd;
  background: #d3e9e7;
`;

/* ---------- workspace ---------- */

const Workspace = styled.main`
  display: grid;
  flex: 1;
  grid-template-columns: 396px minmax(0, 764fr) minmax(0, 760fr);
  min-height: 0;
`;

const Side = styled.aside`
  display: flex;
  flex-direction: column;
  min-height: 0;
  border-right: 2px solid #c4c4c6;
  background: #f0f0f0;
`;

const DockTitle = styled.div`
  display: flex;
  flex: none;
  align-items: center;
  justify-content: space-between;
  height: 25px;
  padding: 0 7px 0 4px;
  color: #505050;
`;

const TypePicker = styled.button`
  display: flex;
  flex: none;
  align-items: center;
  gap: 6px;
  height: 88px;
  margin: 0 3px 0 2px;
  padding: 3px;
  border: 1px solid #d0d0d0;
  border-bottom: 0;
  color: #555;
  text-align: left;
`;

const Swatch = styled.span`
  width: 82px;
  height: 82px;
  border: 1px solid #ccc;
  background: linear-gradient(#fff 22px, #063 22px, #008a00 23px 58px, #fff 58px);
`;

const TypeName = styled.span`
  flex: 1;
`;

const FilterRow = styled.div`
  display: flex;
  flex: none;
  align-items: center;
  height: 28px;
  padding-left: 2px;
`;

const SelectBox = styled.div`
  position: relative;
  width: ${({ $w }) => $w}px;

  svg {
    position: absolute;
    top: 8px;
    right: 5px;
    pointer-events: none;
  }
`;

const Select = styled.select`
  display: block;
  width: 100%;
  height: ${({ $h }) => $h}px;
  padding: 0 4px;
  border: 1px solid ${({ $line }) => $line || '#fff'};
  border-radius: 0;
  appearance: none;
  color: ${({ $off }) => ($off ? '#888' : '#222')};
  background: ${({ $bg }) => $bg || '#fff'};
`;

const Dropdown = ({ label, value, w, h, bg, line, off }) => (
  <SelectBox $w={w}>
    <Select aria-label={label} defaultValue={value} $h={h} $bg={bg} $line={line} $off={off}>
      <option>{value}</option>
    </Select>
    <svg width="11" height="8" viewBox="0 0 11 8" aria-hidden="true">
      <path d="M1 1 L5.500 6 L10 1" fill="none" stroke="#888" strokeWidth="1.300" />
    </svg>
  </SelectBox>
);

const EditType = styled.button`
  display: flex;
  align-items: center;
  gap: 5px;
  padding-left: 6px;
  color: #222;
`;

const GridWrap = styled.div`
  display: flex;
  flex: none;
  height: 241px;
  padding-left: 2px;
`;

const PropTable = styled.table`
  width: 369px;
  border-collapse: collapse;
  table-layout: fixed;
  background: #fff;

  th, td {
    height: 24px;
    padding: 0 0 0 2px;
    border: 1px dotted #a8a8a8;
    border-width: 0 1px 1px 0;
    line-height: 20px;
    font-weight: 400;
    text-align: left;
    white-space: nowrap;
  }

  th {
    padding-left: 10px;
  }
`;

const PropRow = styled.tr`
  color: ${({ $off }) => ($off ? '#8b8b8b' : '#1c1c1c')};
`;

const GroupRow = styled.tr`
  color: #333;
  background: #dadada;

  && th {
    padding-left: 2px;
    border: 0;
  }

  div {
    display: flex;
    justify-content: space-between;
    padding-right: 6px;
  }
`;

const Check = styled.input`
  display: block;
  width: 16px;
  height: 16px;
  border: 1px solid #333;
  appearance: none;
  background: #fff;

  &:disabled {
    border-color: #ccc;
  }

  &:checked::after {
    display: block;
    width: 5px;
    height: 9px;
    margin: 1px auto;
    border: solid #333;
    border-width: 0 1px 1px 0;
    transform: rotate(42deg);
    content: '';
  }
`;

const DockFooter = styled.div`
  display: flex;
  flex: none;
  align-items: flex-start;
  justify-content: space-between;
  height: 34px;
  padding: 2px 5px 0 4px;
  border-bottom: 2px solid #cacaca;

  a {
    color: #2468a8;
  }
`;

const Apply = styled.button`
  width: 86px;
  height: 26px;
  color: #969696;
  background: #cbcbcb;
`;

const VBar = styled.div`
  display: flex;
  flex: none;
  flex-direction: column;
  align-items: center;
  width: 19px;
  padding: 6px 0;
  background: #f1f1f1;
`;

const VTrack = styled.div`
  display: flex;
  flex: 1;
  flex-direction: column;
  align-self: stretch;
  padding: 3px 0;
`;

const Space = styled.div`
  flex: ${({ $n }) => $n} 1 0;
`;

const VThumb = styled.div`
  flex: ${({ $n }) => $n || '0 0 21px'};
  background: #cbcbcb;
`;

const VScroll = ({ before, thumb, after }) => (
  <VBar>
    <Chevron dir="up" />
    <VTrack>
      <Space $n={before} />
      <VThumb $n={thumb} />
      <Space $n={after} />
    </VTrack>
    <Chevron dir="down" />
  </VBar>
);

const Browser = styled.div`
  display: flex;
  flex: 1;
  min-height: 0;
  padding-right: 3px;
  border-bottom: 3px solid #eee;
`;

const Tree = styled.ul`
  flex: 1;
  margin: 0 0 0 2px;
  padding: 0;
  overflow: hidden;
  list-style: none;
  font-family: 'Noto Sans', 'Open Sans', sans-serif;
  color: #262626;
  background: #fff;
`;

const TreeRow = styled.li`
  display: flex;
  align-items: center;
  height: 22px;
  font-weight: ${({ $bold }) => ($bold ? 700 : 400)};
`;

const vDots = 'repeating-linear-gradient(#aaa 0 1px, transparent 1px 2px) 10px 0 / 1px';
const hDots = 'repeating-linear-gradient(90deg, #aaa 0 1px, transparent 1px 2px) right 11px';

const Guide = styled.span`
  display: flex;
  flex: none;
  align-items: center;
  width: ${({ $w }) => $w || 26}px;
  height: 22px;
  padding-left: 4px;
  background:
    ${({ $v }) => `${vDots} ${{ full: '100%', half: '50%' }[$v] || '0'} no-repeat`},
    ${({ $h }) => `${hDots} / ${$h || 0}px 1px no-repeat`};
`;

const Expander = styled.button`
  width: 13px;
  height: 13px;
  border: 1px solid #999;
  background: linear-gradient(#666, #666) center / 7px 1px no-repeat #f4f4f4;
`;

const TreeLabel = styled.span`
  padding: 0 3px;
  line-height: 22px;
  white-space: nowrap;
  background: ${({ $on }) => ($on ? '#dedee0' : 'none')};
`;

/* ---------- views ---------- */

const Column = styled.div`
  display: grid;
  grid-template-rows: ${({ $rows }) => $rows};
  min-width: 0;
  min-height: 0;
  border-right: ${({ $edge }) => ($edge ? '2px solid #c4c4c6' : 0)};
`;

const ViewBox = styled.section`
  display: flex;
  flex-direction: column;
  min-height: 0;
`;

const ViewTabs = styled.div`
  display: flex;
  flex: none;
  align-items: center;
  height: 25px;
  padding-right: 1px;
  background: #cbcbcc;
`;

const ViewTab = styled.button`
  display: flex;
  align-items: center;
  gap: 9px;
  width: 160px;
  height: 25px;
  padding: 0 7px 0 6px;
  font-weight: ${({ $bold }) => ($bold ? 700 : 400)};
  color: #555;
  background: ${({ $on }) => ($on ? '#f3f3f4' : 'none')};
`;

const Push = styled.span`
  flex: 1;
`;

const ViewMain = styled.div`
  display: flex;
  flex: 1;
  min-height: 0;
  padding-right: ${({ $gutter }) => $gutter}px;
  background: #f6f6f6;
`;

const Canvas = styled.div`
  position: relative;
  flex: 1;
  min-width: 0;
  overflow: hidden;
  background: #fff;

  > svg {
    display: block;
    width: 100%;
    height: 100%;
  }
`;

const NavBar = styled.div`
  position: absolute;
  top: ${({ $top }) => $top}px;
  right: 1px;
  display: flex;
  flex-direction: column;
  align-items: center;
  width: 36px;
  height: 118px;
  border: 2px solid #bdbdbf;
  border-radius: 5px;
  background: #f7f7f7;
`;

const NavDot = styled.span`
  align-self: flex-end;
  width: 8px;
  height: 8px;
  margin: 2px 3px;
  border: 1px solid #999;
  border-radius: 50%;
`;

const NavTool = styled.button`
  display: flex;
  flex: 1;
  flex-direction: column;
  align-items: center;
  justify-content: space-evenly;
  width: 27px;

  & + & {
    border-top: 1px solid #bbb;
  }
`;

const NavBadge = styled.span`
  position: absolute;
  top: 30px;
  left: 17px;
  font-size: 11px;
  line-height: 16px;
  color: #5a7db5;
`;

const ViewBar = styled.div`
  display: flex;
  flex: none;
  align-items: center;
  height: 24px;
  padding: 0 ${({ $gutter }) => $gutter + 2}px 2px 28px;
  border-bottom: 1px solid #d0d0d0;
  background: #f0f0f1;
`;

const Scale = styled.button`
  width: 62px;
  color: #222;
  text-align: left;
  white-space: nowrap;
`;

const BarTool = styled.button`
  display: flex;
  flex: none;
  justify-content: center;
  width: 25px;
`;

const HThumb = styled.span`
  width: 21px;
  height: 19px;
  background: #cbcbcb;
`;

const Grip = styled.span`
  width: 11px;
  height: 11px;
  margin-left: 12px;
  background: radial-gradient(circle, #aaa 1px, transparent 2px) 0 0 / 4px 4px;
  clip-path: polygon(100% 0, 100% 100%, 0 100%);
`;

const planTools = ['vDetail', 'vStyle', 'vSun', 'vShadow', 'vCrop', 'vCropShow', 'vGlasses', 'vBulb', 'vDash', 'vModel', 'vConstr'];
const modelTools = ['vGrid', 'vStyle', 'vSun', 'vShadow', 'vFaint', 'vCrop', 'vCropShow', 'vLock', 'vGlasses', 'vBulb', 'vDash', 'vModel', 'vBoxes', 'vConstr'];

const NavigationBar = ({ top, flat }) => (
  <NavBar $top={top}>
    <NavDot />
    <NavTool aria-label="Steering wheel">
      <Icon name={flat ? 'wheel2d' : 'wheel'} size={24} />
      {flat && <NavBadge>2D</NavBadge>}
      <Caret $color="#999" />
    </NavTool>
    <NavTool aria-label="Zoom">
      <Icon name="zoomNav" size={18} />
      <Caret $color="#999" />
    </NavTool>
    <NavDot />
  </NavBar>
);

const View = ({ tabs, icon, active, bold, tools, navTop, flat, gutter, vscroll, hscroll, children }) => (
  <ViewBox>
    <ViewTabs>
      {tabs.map((t) => (
        <ViewTab key={t} $on={t === active} $bold={bold}>
          <Icon name={icon} size={20} />
          {t}
          {bold && <><Push /><Icon name="close" size={13} /></>}
        </ViewTab>
      ))}
      <Push />
      <BarButton $w={20} aria-label="Tab list"><Icon name="more" size={12} /></BarButton>
    </ViewTabs>
    <ViewMain $gutter={gutter}>
      <Canvas>
        {children}
        <NavigationBar top={navTop} flat={flat} />
      </Canvas>
      <VScroll before={vscroll[0]} after={vscroll[1]} />
    </ViewMain>
    <ViewBar $gutter={gutter}>
      <Scale>1 : 100</Scale>
      {tools.map((t) => (
        <BarTool key={t} aria-label={t}><Icon name={t} size={18} /></BarTool>
      ))}
      <BarTool aria-label="Scroll left"><Chevron dir="left" /></BarTool>
      <Space $n={hscroll[0]} />
      <HThumb />
      <Space $n={hscroll[1]} />
      <Chevron dir="right" />
      <Grip />
    </ViewBar>
  </ViewBox>
);

const SlopeMark = ({ x, y, color }) => (
  <g fill="none" stroke={color}>
    <path d={`M${x} ${y} V${y + 10} H${x + 19} L${x} ${y} M${x + 8} ${y + 8} V${y + 5}`} strokeWidth="1.400" />
    <path d={`M${x} ${y + 10} H${x + 19}`} strokeWidth="2" />
  </g>
);

const NorthDrawing = () => (
  <svg aria-label="North elevation" role="img">
    <path d="M600 0 L231 215 V600" fill="none" stroke="#8c8c8c" />
    <path d="M153 244 H2000" stroke="#e83ce0" strokeWidth="2" />
  </svg>
);

const ElevMark = ({ x, y, tip }) => (
  <g fill="#fff" stroke="#999">
    <path d={tip} fill="#999" />
    <circle cx={x} cy={y} r="4" />
  </g>
);

const LevelDrawing = () => (
  <svg aria-label="Level 2 floor plan" role="img">
    <g fill="none" shapeRendering="crispEdges">
      <path d="M197 90 V306 H434 V90 Z" stroke="#a9b0a9" />
      <rect x="196" y="89" width="241" height="218" stroke="#b577b2" />
      <rect x="189" y="83" width="253" height="230" stroke="#c84fc0" />
    </g>
    <SlopeMark x={162} y={177} color="#d633c8" />
    <SlopeMark x={452} y={215} color="#d633c8" />
    <ElevMark x={309} y={27} tip="M304 29 L309 34 L314 29 Z" />
    <ElevMark x={115} y={222} tip="M117 217 L122 222 L117 227 Z" />
    <ElevMark x={505} y={222} tip="M503 217 L498 222 L503 227 Z" />
  </svg>
);

const Face = styled.text`
  font-size: ${({ $size }) => $size}px;
  font-weight: 600;
  text-anchor: middle;
  fill: ${({ $pale }) => ($pale ? '#b5b5b5' : '#8a8a8a')};
`;

const ViewCube = () => (
  <g stroke="#8f8f8f" strokeLinejoin="round">
    <ellipse cx="648" cy="118" rx="57" ry="35" fill="none" stroke="#c9c9c9" strokeWidth="16" />
    <ellipse cx="648" cy="118" rx="57" ry="35" fill="none" stroke="#f5f5f5" strokeWidth="14" />
    <ellipse cx="648" cy="124" rx="34" ry="14" fill="#e9e9e9" stroke="none" />
    <Face $size={13} $pale stroke="none" transform="translate(608 97) rotate(28)">W</Face>
    <Face $size={13} $pale stroke="none" transform="translate(687 97) rotate(-28)">N</Face>
    <Face $size={15} $pale stroke="none" transform="translate(602 150) rotate(-28)">S</Face>
    <Face $size={15} $pale stroke="none" transform="translate(694 150) rotate(28)">E</Face>
    <path d="M648 55 L683 72 L648 92 L613 72 Z" fill="#f6f6f6" />
    <path d="M613 72 L648 92 V132 L615 112 Z" fill="#ececec" />
    <path d="M683 72 L648 92 V132 L681 112 Z" fill="#e6e6e6" />
    <g stroke="none">
      <Face $size={10} transform="translate(647 77) rotate(26)">TOP</Face>
      <Face $size={9} transform="translate(631 106) skewY(28)">FRONT</Face>
      <Face $size={9} transform="translate(665 106) skewY(-28)">RIGHT</Face>
    </g>
  </g>
);

const ModelDrawing = () => (
  <svg aria-label="3D model" role="img">
    <g fill="none" stroke="#a0a0a0">
      <path d="M113 355 V400 L397 563 L653 415 V367 M397 515 V563" />
      <path d="M113 357 L370 209 M115 359 L370 211 M370 207 V254 L216 344 M370 254 L610 391" />
      <path d="M256 342 L397 515 M259 342 L399 514 M512 194 L653 368 M509 196 L650 369" />
      <path d="M397 516 L653 368 M398 519 L653 371" />
      <path d="M113 355 L256 342 M370 207 L512 194" stroke="#9a9a9a" strokeWidth="2" />
      <path d="M327 242 L124 361 M327 242 L587 391 M327 284 L229 340 M327 284 L562 420" strokeDasharray="14 4 8 4" />
    </g>
    <path d="M192 104 H595 V685 H192 Z" fill="none" stroke="#999" strokeWidth="2" strokeDasharray="4 4" />
    <path d="M100 359 L370 203 L666 373 L397 529 Z" fill="none" stroke="#5b50d0" strokeWidth="2" />
    <g fill="none" stroke="#a9b2c2">
      <circle cx="108" cy="367" r="3" />
      <path d="M111 365 L124 358 M111 361 L120 356" />
      <circle cx="108" cy="409" r="3" />
      <path d="M111 407 L127 396 M112 402 L120 398" />
    </g>
    <SlopeMark x={227} y={253} color="#93309c" />
    <SlopeMark x={522} y={474} color="#93309c" />
    <ViewCube />
    <circle cx="193" cy="105" r="9.500" fill="none" stroke="#3d3de0" strokeWidth="3" />
    <Pointer x={193} y={104} s={1.1} />
  </svg>
);

/* ---------- status bar ---------- */

const Status = styled.footer`
  display: flex;
  flex: none;
  align-items: center;
  height: 32px;
  border-bottom: 1px solid #eef3f2;
  background: #c9c9ca;
`;

const StatusPart = styled.div`
  display: flex;
  align-items: center;
  gap: 8px;
  padding-left: ${({ $pad }) => $pad}px;
`;

const Count = styled.span`
  color: #222;
`;

const Picks = styled.div`
  display: flex;
  align-items: center;
  padding-right: 72px;
`;

/* the round brand mark floats above the canvas */
const Brand = styled.div`
  position: fixed;
  right: 44px;
  bottom: 39px;
  display: flex;
  align-items: center;
  justify-content: center;
  width: 100px;
  height: 100px;
  border-radius: 50%;
  background: #fff;
  box-shadow: 0 0 3px #d8c8c8;
`;

/* ---------- data ---------- */

const ribbonTabs = [
  ['Architecture', 108],
  ['Structure', 84],
  ['Steel', 57],
  ['Precast', 73],
  ['Systems', 77],
  ['Insert', 62],
  ['Annotate', 84],
  ['Analyze', 78],
  ['Massing & Site', 123],
  ['Collaborate', 102],
  ['View', 58],
  ['Manage', 77],
  ['Add-Ins', 74],
];

const shapes = ['dLine', 'dRect', 'dPoly', 'dPolyC', 'dCircle', 'dArc3', 'dArcC', 'dArcT', 'dFillet', 'dSpline', 'dEllipse', 'dPartEl', 'dPick', 'dWalls'];

const properties = [
  { name: 'Room Bounding', check: true },
  { name: 'Related to Mass', check: false, off: true },
  { name: 'Base Offset From Level', value: '0.0' },
  { name: 'Cutoff Level', value: 'None' },
  { name: 'Cutoff Offset', value: '0.0', off: true },
  { group: 'Construction' },
  { name: 'Rafter Cut', value: 'Plumb Cut' },
  { name: 'Fascia Depth', value: '200.0', off: true },
  { name: 'Rafter or Truss', value: 'Truss' },
  { name: 'Maximum Ridge Height', value: '13775.4', off: true },
];

const groups = [
  { name: 'Floor Plans', items: ['Level 1', 'Level 2', 'Site'] },
  { name: 'Ceiling Plans', items: ['Level 1', 'Level 2'] },
  { name: '3D Views', items: ['{3D}'] },
  { name: 'Elevations (Building Elevation)', items: ['East', 'North', 'South', 'West'] },
];

const roots = [
  { name: 'Legends', icon: 'legend' },
  { name: 'Schedules/Quantities (all)', icon: 'sched' },
  { name: 'Sheets (all)', icon: 'sheet' },
];

/* ---------- sections ---------- */

const Bar = ({ icon, size = 20, w, caret }) => (
  <>
    <BarButton $w={w} aria-label={icon}><Icon name={icon} size={size} /></BarButton>
    {caret && <BarButton $w={15} aria-label={`${icon} options`}><Caret /></BarButton>}
  </>
);

const Header = () => (
  <TitleBar>
    <Bar icon="revit" size={26} w={33} />
    <Bar icon="home" w={28} />
    <QuickGroup $plain>
      <Bar icon="open" />
      <Bar icon="save" />
      <Bar icon="sync" caret />
      <Bar icon="undo" caret />
      <Bar icon="redo" caret />
      <Bar icon="print" />
    </QuickGroup>
    <QuickGroup>
      <Bar icon="measure" caret />
      <Bar icon="dim" />
      <Bar icon="tag" />
      <Bar icon="letterA" />
    </QuickGroup>
    <QuickGroup>
      <Bar icon="house" w={29} caret />
      <Bar icon="section" />
      <Bar icon="thin" />
    </QuickGroup>
    <QuickGroup>
      <Bar icon="closeHidden" w={28} />
      <Bar icon="windows" caret />
      <Bar icon="more" size={12} w={20} />
    </QuickGroup>
    <AppTitle>Autodesk Revit 2021 - Project3 - 3D View: {'{3D}'}</AppTitle>
    <Bar icon="searchArrow" size={10} w={8} />
    <Bar icon="binoculars" w={40} />
    <SignIn>
      <Icon name="person" size={20} />
      Sign In
    </SignIn>
    <BarButton $w={24} aria-label="Account"><Caret /></BarButton>
    <Bar icon="cart" w={32} />
    <QuickGroup>
      <Bar icon="help" w={40} caret />
    </QuickGroup>
    <WindowButtons>
      <Bar icon="min" size={16} w={32} />
      <Bar icon="restore" size={16} w={32} />
      <Bar icon="close" size={14} w={32} />
    </WindowButtons>
  </TitleBar>
);

const RibbonPanels = () => (
  <Ribbon>
    <Panel name="Select" w={72} pad={10} caret>
      <Tall icon="cursor" size={26} w={53} label="Modify" on />
    </Panel>
    <Panel name="Properties" w={81} center>
      <Large $w={47}>
        <Tool aria-label="Type properties"><Icon name="typeProps" size={38} /></Tool>
        <Pressed aria-label="Properties"><Icon name="props" size={38} /></Pressed>
      </Large>
    </Panel>
    <Panel name="Clipboard" w={98} pad={8} gap={10}>
      <Tall icon="paste" w={50} label="Paste" off caret />
      <Small $w={22}>
        {['cutClip', 'copyClip', 'match'].map((i) => <Tool key={i} aria-label={i}><Icon name={i} /></Tool>)}
      </Small>
    </Panel>
    <Panel name="Geometry" w={178} pad={6}>
      <Small $w={89}>
        <Tool $align="flex-start" $off><Icon name="cope" />Cope<Caret /></Tool>
        <Tool $align="flex-start" $off><Icon name="cutG" />Cut<Caret /></Tool>
        <Tool $align="flex-start" $off><Icon name="joinG" />Join<Caret /></Tool>
      </Small>
      <Small $w={32}>
        {['beam', 'wallJoin', 'split'].map((i) => <Tool key={i} $align="flex-start" aria-label={i}><Icon name={i} /></Tool>)}
      </Small>
      <Small $w={46}>
        {['face', 'paint', 'demolish'].map((i) => (
          <Tool key={i} $align="flex-start" aria-label={i}>
            <Icon name={i} />
            {i === 'paint' && <Caret />}
          </Tool>
        ))}
      </Small>
    </Panel>
    <Panel name="Modify" w={293} gap={8}>
      <Large $cols={4} $w={42}>
        {['align', 'offset', 'mirrorPick', 'mirrorDraw', 'move', 'copyBig', 'rotate', 'trim'].map((i) => (
          <Tool key={i} aria-label={i}><Icon name={i} size={i === 'offset' ? 34 : 38} /></Tool>
        ))}
      </Large>
      <Small $cols={3} $w={24}>
        {['splitEl', 'splitGap', 'unpin', 'array', 'scale', 'pin', 'trimOne', 'trimMany', 'del'].map((i) => (
          <Tool key={i} aria-label={i}><Icon name={i} size={i.startsWith('split') ? 14 : 20} /></Tool>
        ))}
      </Small>
    </Panel>
    <Panel name="View" w={82} pad={8} gap={3}>
      <Small $w={42}>
        <Tool $align="flex-start" aria-label="Hide"><Icon name="bulb" /><Caret $color="#888" /></Tool>
        <Tool $align="flex-start" aria-label="Override"><Icon name="brush" /><Caret $color="#888" /></Tool>
        <Tool $align="flex-start" aria-label="Displace"><Icon name="displace" /></Tool>
      </Small>
      <Small $w={22}>
        <Tool aria-label="Selection box"><Icon name="hideBox" /></Tool>
        <Tool aria-label="Linework"><Icon name="lineW" /></Tool>
      </Small>
    </Panel>
    <Panel name="Measure" w={71} pad={7}>
      <Large $w={55}>
        <Tool $align="space-between" aria-label="Measure"><Icon name="rulerBig" size={34} /><Caret $color="#777" /></Tool>
        <Tool $align="space-between" aria-label="Dimension"><Icon name="dimBig" size={38} /><Caret /></Tool>
      </Large>
    </Panel>
    <Panel name="Create" w={105} pad={6}>
      <Large $cols={2} $w={40}>
        {['group1', 'group2', 'assembly', 'similar'].map((i) => <Tool key={i} aria-label={i}><Icon name={i} size={38} /></Tool>)}
      </Large>
    </Panel>
    <Panel name="Mode" w={56} center context>
      <Large $w={40}>
        <Tool aria-label="Cancel"><Icon name="cancel" size={28} /></Tool>
        <Tool aria-label="Finish"><Icon name="accept" size={24} /></Tool>
      </Large>
    </Panel>
    <Panel name="Draw" w={296} pad={7} context>
      <DrawModes>
        <Tool $align="flex-start"><Icon name="boundary" />Boundary Line</Tool>
        <Tool $align="flex-start"><Icon name="slope" />Slope Arrow</Tool>
      </DrawModes>
      <Gallery>
        <GalleryGrid>
          {shapes.map((s) => <Tool key={s} aria-label={s}><Icon name={s} /></Tool>)}
        </GalleryGrid>
        <GallerySteps>
          <button type="button" aria-label="Row up"><UpCaret /></button>
          <button type="button" aria-label="Row down"><Caret $color="#777" /></button>
          <button type="button" aria-label="All shapes"><Icon name="more" size={11} /></button>
        </GallerySteps>
      </Gallery>
    </Panel>
    <Panel name="Work Plane" w={205} pad={2} context>
      <Tall icon="wpSet" w={49} label="Set" />
      <Tall icon="wpShow" w={49} label="Show" />
      <Tall icon="refPlane" w={49} label={<>Ref<br />Plane</>} off />
      <Tall icon="viewer" w={50} label="Viewer" />
    </Panel>
    <Panel name="Tools" w={209} pad={3} gap={7} context>
      <Tall icon="eaves" w={44} label={<>Align<br />Eaves</>} />
      <AdjustList>
        <Adjust $on><Icon name="adjH" />{'Adjust\u00a0\u00a0Height'}</Adjust>
        <Adjust><Icon name="adjO" />{'Adjust\u00a0\u00a0Overhang'}</Adjust>
      </AdjustList>
    </Panel>
  </Ribbon>
);

const PropertyGrid = () => (
  <GridWrap>
    <PropTable>
      <colgroup>
        <col style={{ width: 177 }} />
        <col />
        <col style={{ width: 15 }} />
      </colgroup>
      <tbody>
        {properties.map((p) => (p.group ? (
          <GroupRow key={p.group}>
            <th colSpan="3">
              <div>
                {p.group}
                <Svg width="9" height="12" viewBox="0 0 9 12" aria-hidden="true">
                  <path d="M1 5 L4.500 1.500 L8 5 M1 9 L4.500 5.500 L8 9" fill="none" stroke="#222" strokeWidth="1.500" />
                </Svg>
              </div>
            </th>
          </GroupRow>
        ) : (
          <PropRow key={p.name} $off={p.off}>
            <th scope="row">{p.name}</th>
            <td>
              {p.value || <Check type="checkbox" aria-label={p.name} defaultChecked={p.check} disabled={p.off} />}
            </td>
            <td />
          </PropRow>
        )))}
      </tbody>
    </PropTable>
    <VScroll before={20} thumb="72 1 0" after={104} />
  </GridWrap>
);

const ProjectTree = () => (
  <Browser>
    <Tree>
      <TreeRow>
        <Guide $h={5}><Expander aria-label="Collapse Views" /></Guide>
        <Icon name="views" size={18} />
        <Guide $w={5} />
        <TreeLabel>Views (all)</TreeLabel>
      </TreeRow>
      {groups.map((g, gi) => {
        const lastGroup = gi === groups.length - 1;
        return (
          <React.Fragment key={g.name}>
            <TreeRow>
              <Guide $v="full" />
              <Guide $v={lastGroup ? 'half' : 'full'} $h={5}><Expander aria-label={`Collapse ${g.name}`} /></Guide>
              <Guide $w={4} $h={4} />
              <TreeLabel>{g.name}</TreeLabel>
            </TreeRow>
            {g.items.map((item, i) => (
              <TreeRow key={item} $bold={item === '{3D}'}>
                <Guide $v="full" />
                <Guide $v={lastGroup ? 'none' : 'full'} />
                <Guide $w={29} $v={i === g.items.length - 1 ? 'half' : 'full'} $h={18} />
                <TreeLabel $on={item === 'North'}>{item}</TreeLabel>
              </TreeRow>
            ))}
          </React.Fragment>
        );
      })}
      {roots.map((r) => (
        <TreeRow key={r.name}>
          <Guide $v="full" $h={15} />
          <Icon name={r.icon} size={17} />
          <Guide $w={4} />
          <TreeLabel>{r.name}</TreeLabel>
        </TreeRow>
      ))}
    </Tree>
    <VScroll before={1} thumb="282 1 0" after={63} />
  </Browser>
);

const Docks = () => (
  <Side>
    <DockTitle>
      Properties
      <BarButton $w={14} aria-label="Close Properties"><Icon name="close" size={13} /></BarButton>
    </DockTitle>
    <TypePicker>
      <Swatch />
      <TypeName>Basic Roof<br />Generic - 400mm</TypeName>
      <Caret />
    </TypePicker>
    <FilterRow>
      <Dropdown label="Category" value="Roofs" w={293} h={28} bg="#e1e1e1" line="#adadad" />
      <EditType><Icon name="typeSmall" size={16} />Edit Type</EditType>
    </FilterRow>
    <PropertyGrid />
    <DockFooter>
      <a href="#help">Properties help</a>
      <Apply disabled>Apply</Apply>
    </DockFooter>
    <DockTitle>
      Project Browser - Project3
      <BarButton $w={14} aria-label="Close Project Browser"><Icon name="close" size={13} /></BarButton>
    </DockTitle>
    <ProjectTree />
  </Side>
);

const StatusBar = () => (
  <Status>
    <StatusPart $pad={689}>
      <Icon name="buildings" />
      <Dropdown label="Workset" value="" w={254} h={22} off />
      <Icon name="workset" />
      <Count>:0</Count>
    </StatusPart>
    <StatusPart $pad={22}>
      <Icon name="block" />
      <Icon name="optionSet" />
    </StatusPart>
    <StatusPart $pad={8}>
      <Dropdown label="Design option" value="Main Model" w={254} h={22} off />
    </StatusPart>
    <Push />
    <Picks>
      {['selLink', 'selUnder', 'selPin', 'selFace', 'drag', 'ring'].map((i) => <Bar key={i} icon={i} />)}
      <Bar icon="filter" w={26} />
      <Count>:0</Count>
    </Picks>
  </Status>
);

const App = () => (
  <Page>
    <GlobalStyle />
    <Header />
    <TabRow>
      <Tab $file $w={56}>File</Tab>
      {ribbonTabs.map(([name, w]) => <Tab key={name} $w={w}>{name}</Tab>)}
      <Tab $context $w={228}>Modify | Roofs &gt; Edit Footprint</Tab>
      <MinimizeTab aria-label="Minimize ribbon"><Pill /><Caret /></MinimizeTab>
    </TabRow>
    <RibbonPanels />
    <OptionsBar>Modify | Roofs &gt; Edit Footprint</OptionsBar>
    <Workspace>
      <Docks />
      <Column $edge $rows="minmax(0, 414fr) minmax(0, 416fr)">
        <View tabs={['North', 'East']} active="North" icon="elev" tools={planTools} navTop={2} flat gutter={4} vscroll={[152, 157]} hscroll={[151, 158]}>
          <NorthDrawing />
        </View>
        <View tabs={['Level 1', 'Level 2']} active="Level 2" icon="plan" tools={planTools} navTop={3} flat gutter={4} vscroll={[155, 152]} hscroll={[151, 158]}>
          <LevelDrawing />
        </View>
      </Column>
      <Column $rows="minmax(0, 1fr)">
        <View tabs={['{3D}']} active="{3D}" icon="house" bold tools={modelTools} navTop={173} gutter={2} vscroll={[362, 362]} hscroll={[113, 120]}>
          <ModelDrawing />
        </View>
      </Column>
    </Workspace>
    <StatusBar />
    <Brand>
      <svg width="50" height="38" viewBox="0 0 50 38" aria-label="Logo" role="img">
        <path d="M11 3 Q14 0 17 3 L25 11 L33 3 Q36 0 39 3 L49 14 Q50 17 48 19 L25 37 L2 19 Q0 17 1 14 Z" fill="#c4161c" />
      </svg>
    </Brand>
  </Page>
);

export default App;
